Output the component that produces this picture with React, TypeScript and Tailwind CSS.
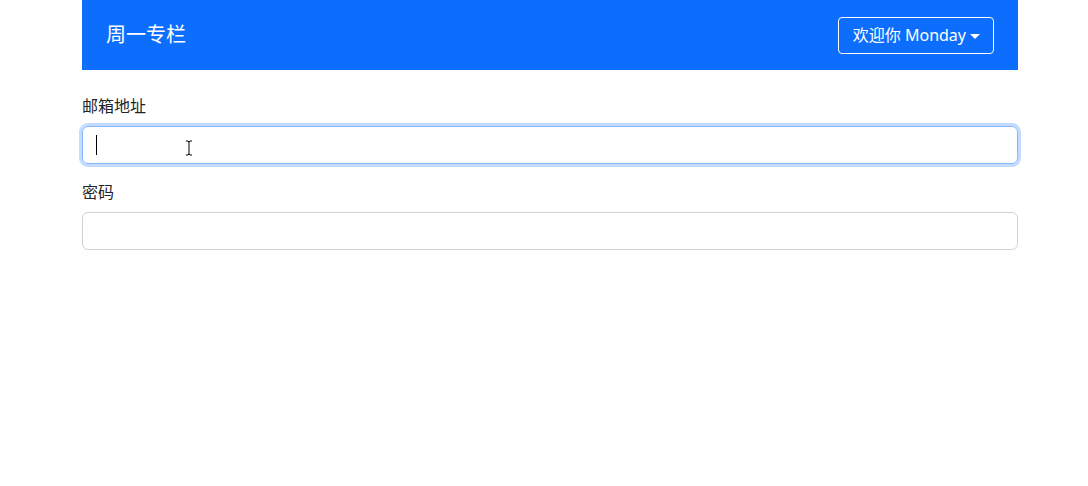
export default function App() {
  return (
    <div className="min-h-screen bg-white font-['Noto_Sans','Noto_Sans_CJK_SC',sans-serif] text-[#212529]">
      <div className="ml-[82px] w-[936px]">
        <nav className="flex h-[70px] items-center justify-between bg-[#0d6efd] px-6">
          <span className="text-[20px] leading-[30px] text-white">周一专栏</span>
          <button className="flex h-[37px] items-center gap-1 rounded-[4px] border border-white pl-[14px] pr-[13px] text-[16px] leading-6 text-white">
            欢迎你 Monday
            <span className="mt-[2px] h-0 w-0 border-x-[5px] border-t-[5px] border-x-transparent border-t-white"></span>
          </button>
        </nav>

        <form className="mt-6">
          <div className="mb-4">
            <label className="mb-2 block text-[16px] leading-6">邮箱地址</label>
            <div className="relative h-[38px] rounded-md border border-[#86b7fe] shadow-[0_0_0_3px_rgba(13,110,253,0.25)]">
              <span className="absolute left-[13px] top-[8px] h-[20px] w-px bg-black"></span>
              <svg className="absolute left-[102px] top-[13px]" width="8" height="16" viewBox="0 0 8 16">
                <path d="M1 1h2l1 1 1-1h2M4 2v12M1 15h2l1-1 1 1h2" stroke="#000" strokeWidth="1" fill="none" />
              </svg>
            </div>
          </div>
          <div>
            <label className="mb-2 block text-[16px] leading-6">密码</label>
            <input type="password" className="block h-[38px] w-full rounded-md border border-[#ced4da] px-3 outline-none" />
          </div>
        </form>
      </div>
    </div>
  );
}
